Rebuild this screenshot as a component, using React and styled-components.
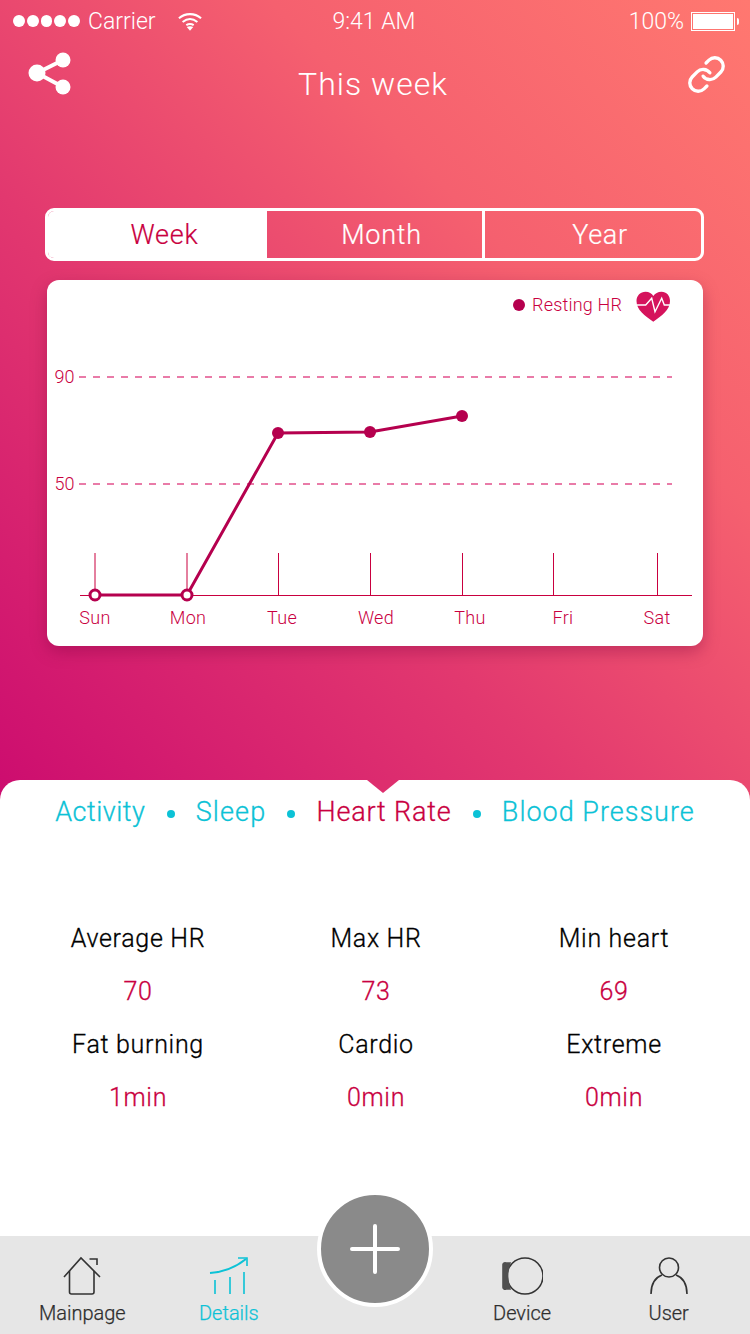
import React from "react";
import styled, { createGlobalStyle } from "styled-components";

const RED = "#c9003f";
const CYAN = "#0cc2d6";

const GlobalStyle = createGlobalStyle`
  html, body {
    margin: 0;
    padding: 0;
    background: #fff;
    font-family: "Roboto", "Liberation Sans", sans-serif;
  }
`;

const Page = styled.div`
  width: 750px;
  height: 1334px;
  display: flex;
  flex-direction: column;
  overflow: hidden;
  background: linear-gradient(to top right, #cc0c6f 0%, #e2386f 38%, #f5606f 68%, #ff7870 100%) 0 0 / 750px 800px no-repeat;
`;

const Hero = styled.div`
  height: 780px;
  flex: none;
  display: flex;
  flex-direction: column;
`;

const StatusBar = styled.div`
  height: 42px;
  display: grid;
  grid-template-columns: 1fr auto 1fr;
  align-items: center;
  padding: 0 15px 0 13px;
  color: #fff;
  font-size: 23px;
  font-weight: 300;
`;

const StatusLeft = styled.div`
  display: flex;
  align-items: center;
`;

const StatusRight = styled.div`
  display: flex;
  align-items: center;
  justify-content: flex-end;
  gap: 7px;
`;

const Dots = styled.div`
  display: flex;
  gap: 2px;
  margin-right: 8px;
`;

const SignalDot = styled.span`
  width: 11.8px;
  height: 11.8px;
  border-radius: 50%;
  background: #fff;
`;

const WifiIcon = styled.svg`
  margin-left: 22px;
`;

const Battery = styled.div`
  width: 40px;
  height: 15px;
  border: 1px solid #fff;
  padding: 1px;
  box-sizing: content-box;
  position: relative;
  &::before {
    content: "";
    display: block;
    height: 100%;
    background: #fff;
  }
  &::after {
    content: "";
    position: absolute;
    right: -5px;
    top: 5px;
    width: 2px;
    height: 7px;
    background: #fff;
    border-radius: 0 2px 2px 0;
  }
`;

const Header = styled.div`
  height: 87px;
  box-sizing: border-box;
  display: grid;
  grid-template-columns: 1fr auto 1fr;
  align-items: start;
  padding: 9px 25px 0 28px;
`;

const LinkIcon = styled.svg`
  justify-self: end;
  margin-top: 5px;
`;

const Title = styled.div`
  color: #fff;
  font-size: 32px;
  font-weight: 300;
  letter-spacing: 1px;
  line-height: 38px;
  margin: 14px 7px 0 0;
`;

const Tabs = styled.div`
  margin: 79px 46px 0 45px;
  height: 53px;
  box-sizing: border-box;
  display: grid;
  grid-template-columns: 219px 218px 1fr;
  border: 3px solid #fff;
  border-radius: 9px;
  overflow: hidden;
`;

const Tab = styled.div`
  display: flex;
  align-items: center;
  justify-content: center;
  padding-left: 14px;
  font-size: 27px;
  font-weight: 300;
  letter-spacing: 0.7px;
  -webkit-text-stroke: 0.2px currentColor;
  color: ${(p) => (p.$active ? RED : "#fff")};
  background: ${(p) => (p.$active ? "#fff" : "transparent")};
  border-right: ${(p) => (p.$last || p.$active ? "none" : "3px solid #fff")};
`;

const Card = styled.div`
  margin: 19px 47px 0;
  height: 366px;
  background: #fff;
  border-radius: 12px;
  box-shadow: 0 6px 16px rgba(120, 0, 60, 0.35);
`;

const ChartSvg = styled.svg`
  display: block;
  width: 656px;
  height: 366px;
  font-family: "Roboto", "Liberation Sans", sans-serif;
  font-weight: 300;
  text {
    -webkit-text-stroke: 0.25px currentColor;
    color: ${RED};
  }
`;

const Sheet = styled.div`
  position: relative;
  height: 456px;
  flex: none;
  box-sizing: border-box;
  padding-top: 14px;
  background: #fff;
  border-radius: 20px 20px 0 0;
  &::before {
    content: "";
    position: absolute;
    left: 367px;
    top: 0;
    border-left: 16px solid transparent;
    border-right: 16px solid transparent;
    border-top: 13px solid #de2f6e;
  }
`;

const Categories = styled.div`
  display: flex;
  justify-content: center;
  align-items: center;
  height: 36px;
`;

const Category = styled.span`
  font-size: 27px;
  font-weight: 300;
  letter-spacing: ${(p) => p.$spacing}px;
  -webkit-text-stroke: 0.3px currentColor;
  color: ${(p) => (p.$active ? RED : CYAN)};
`;

const Bullet = styled.span`
  width: 8px;
  height: 8px;
  border-radius: 50%;
  background: ${CYAN};
  margin: 4px 21.2px 0;
`;

const Stats = styled.div`
  margin: 82px 17px 0 19px;
  display: grid;
  grid-template-columns: repeat(3, 238px);
  grid-auto-rows: 53px;
  text-align: center;
  line-height: 53px;
`;

const StatLabel = styled.div`
  font-size: 25px;
  font-weight: 300;
  letter-spacing: 0.7px;
  -webkit-text-stroke: 0.3px currentColor;
  color: #000;
`;

const StatValue = styled.div`
  font-size: 25px;
  font-weight: 300;
  letter-spacing: 0.7px;
  -webkit-text-stroke: 0.3px currentColor;
  color: ${RED};
`;

const Nav = styled.div`
  position: relative;
  height: 98px;
  flex: none;
  box-sizing: border-box;
  background: #e6e6e6;
  display: grid;
  grid-template-columns: repeat(5, 146.6px);
  padding-left: 9px;
`;

const NavItem = styled.div`
  display: flex;
  flex-direction: column;
  align-items: center;
  color: ${(p) => (p.$active ? CYAN : "#2e2e2e")};
  font-size: 20px;
  font-weight: 300;
  -webkit-text-stroke: 0.25px currentColor;
  padding-top: 20px;
  grid-column: ${(p) => p.$col};
  svg {
    display: block;
    height: 40px;
  }
  span {
    line-height: 26px;
    margin-top: 4px;
  }
`;

const Fab = styled.div`
  position: absolute;
  left: 317px;
  top: -45px;
  width: 108px;
  height: 108px;
  border-radius: 50%;
  background: #8a8a8a;
  border: 4px solid #fff;
  display: flex;
  align-items: center;
  justify-content: center;
`;

const days = [
  { name: "Sun", tick: 48, label: 48 },
  { name: "Mon", tick: 140, label: 141 },
  { name: "Tue", tick: 231.5, label: 235 },
  { name: "Wed", tick: 323.5, label: 329 },
  { name: "Thu", tick: 415.5, label: 423 },
  { name: "Fri", tick: 506.5, label: 516 },
  { name: "Sat", tick: 610.5, label: 610 },
];

const Chart = () => (
  <ChartSvg viewBox="0 0 656 366">
    <circle cx="472" cy="25" r="6" fill="#b5004e" />
    <text x="485" y="30.5" fontSize="18" letterSpacing="0.2" fill={RED}>Resting HR</text>
    <path d="M606.3 41.7C598 36 589.5 30 589.5 21C589.5 15.5 593.5 11.7 598.5 11.7C602 11.7 605 13.5 606.3 16C608 13.5 611 11.7 614.5 11.7C619.5 11.7 623 15.5 623 21C623 30 614.5 36 606.3 41.7Z" fill="#d5135c" />
    <path d="M589.7 25h9l6-6.7 3.3 13.4 6.7-13.4 2.6 6.7h5.7" fill="none" stroke="#fff" strokeWidth="1.4" />
    {[{ v: 90, y: 97 }, { v: 50, y: 204 }].map((g) => (
      <g key={g.v}>
        <text x="7.5" y={g.y + 6} fontSize="18" fill={RED}>{g.v}</text>
        <line x1="32" x2="625" y1={g.y} y2={g.y} stroke="#e2508c" strokeWidth="1.5" strokeDasharray="7 7" />
      </g>
    ))}
    <line x1="33" x2="645" y1="315.5" y2="315.5" stroke={RED} strokeWidth="1" />
    {days.map((d) => (
      <g key={d.name}>
        <line x1={d.tick} x2={d.tick} y1="273" y2="315" stroke={RED} strokeWidth="1" />
        <text x={d.label} y="344" fontSize="18" letterSpacing="0.3" textAnchor="middle" fill={RED}>{d.name}</text>
      </g>
    ))}
    <polyline points="48,315 140,315 231,153 323,152 415,136" fill="none" stroke="#b5004e" strokeWidth="3" />
    <circle cx="48" cy="315" r="5" fill="#fff" stroke="#b5004e" strokeWidth="3" />
    <circle cx="140" cy="315" r="5" fill="#fff" stroke="#b5004e" strokeWidth="3" />
    <circle cx="231" cy="153" r="6" fill="#b5004e" />
    <circle cx="323" cy="152" r="6" fill="#b5004e" />
    <circle cx="415" cy="136" r="6" fill="#b5004e" />
  </ChartSvg>
);

const stats = [
  ["Average HR", "70"],
  ["Max HR", "73"],
  ["Min heart", "69"],
  ["Fat burning", "1min"],
  ["Cardio", "0min"],
  ["Extreme", "0min"],
];

export default function App() {
  const firstRow = stats.slice(0, 3);
  const secondRow = stats.slice(3);
  return (
    <Page>
      <GlobalStyle />
      <Hero>
        <StatusBar>
          <StatusLeft>
            <Dots>
              {[0, 1, 2, 3, 4].map((i) => <SignalDot key={i} />)}
            </Dots>
            Carrier
            <WifiIcon width="24" height="19" viewBox="0 0 26 20">
              <path d="M1 6.5c7-6 17-6 24 0M5 10.5c5-4 11-4 16 0M9 14c3-2 5-2 8 0" fill="none" stroke="#fff" strokeWidth="2.2" />
              <path d="M13 20l-3.5-4c2-1.2 5-1.2 7 0z" fill="#fff" />
            </WifiIcon>
          </StatusLeft>
          <div>9:41 AM</div>
          <StatusRight>
            100%
            <Battery />
          </StatusRight>
        </StatusBar>
        <Header>
          <svg width="44" height="44" viewBox="0 0 44 44">
            <path d="M9 22L35 9M9 22l26 14" stroke="#fff" strokeWidth="4" />
            <circle cx="9" cy="22" r="8.5" fill="#fff" />
            <circle cx="35" cy="9" r="7.5" fill="#fff" />
            <circle cx="35" cy="36" r="7.5" fill="#fff" />
          </svg>
          <Title>This week</Title>
          <LinkIcon width="37" height="37" viewBox="1 1 22 22" fill="none" stroke="#fff" strokeWidth="2" strokeLinecap="round" strokeLinejoin="round">
            <path d="M10 13a5 5 0 0 0 7.54.54l3-3a5 5 0 0 0-7.07-7.07l-1.72 1.71" />
            <path d="M14 11a5 5 0 0 0-7.54-.54l-3 3a5 5 0 0 0 7.07 7.07l1.71-1.71" />
          </LinkIcon>
        </Header>
        <Tabs>
          <Tab $active>Week</Tab>
          <Tab>Month</Tab>
          <Tab $last>Year</Tab>
        </Tabs>
        <Card>
          <Chart />
        </Card>
      </Hero>
      <Sheet>
        <Categories>
          <Category $spacing={0.5}>Activity</Category>
          <Bullet />
          <Category $spacing={1.1}>Sleep</Category>
          <Bullet />
          <Category $active $spacing={0.8}>Heart Rate</Category>
          <Bullet />
          <Category $spacing={1}>Blood Pressure</Category>
        </Categories>
        <Stats>
          {firstRow.map(([label]) => <StatLabel key={label}>{label}</StatLabel>)}
          {firstRow.map(([label, value]) => <StatValue key={label}>{value}</StatValue>)}
          {secondRow.map(([label]) => <StatLabel key={label}>{label}</StatLabel>)}
          {secondRow.map(([label, value]) => <StatValue key={label}>{value}</StatValue>)}
        </Stats>
      </Sheet>
      <Nav>
        <NavItem $col="1">
          <svg width="40" height="38" viewBox="0 0 40 38" fill="none" stroke="#333" strokeWidth="1.6">
            <path d="M2 20L19 1l19 19" />
            <path d="M7.5 14v21a2 2 0 0 0 2 2h20.500a2 2 0 0 0 2-2V14" />
            <path d="M27.500 2H35v6" />
          </svg>
          <span>Mainpage</span>
        </NavItem>
        <NavItem $active $col="2">
          <svg width="40" height="38" viewBox="0 0 40 38" fill="none" stroke={CYAN} strokeWidth="1.6">
            <path d="M1 16c14-1 26-6 36-14" strokeWidth="2" />
            <path d="M29 1h9v8" />
            <path d="M6 37V23M21 37V20M35 37V15" />
          </svg>
          <span>Details</span>
        </NavItem>
        <NavItem $col="4">
          <svg width="42" height="38" viewBox="0 0 42 38" fill="none" stroke="#333" strokeWidth="1.6">
            <circle cx="24" cy="19" r="18" />
            <path d="M9 6H5a2 2 0 0 0-3 2v22a2 2 0 0 0 3 2h4c-3-8-3-18 0-26z" fill="#505050" stroke="#505050" />
          </svg>
          <span>Device</span>
        </NavItem>
        <NavItem $col="5">
          <svg width="38" height="38" viewBox="0 0 38 38" fill="none" stroke="#333" strokeWidth="1.6">
            <circle cx="19" cy="10.500" r="9.500" />
            <path d="M1 37c0-9 3-16 11-19M37 37c0-9-3-16-11-19" />
          </svg>
          <span>User</span>
        </NavItem>
        <Fab>
          <svg width="50" height="50" viewBox="0 0 50 50" stroke="#fff" strokeWidth="4" strokeLinecap="round">
            <path d="M25 2v46M2 25h46" />
          </svg>
        </Fab>
      </Nav>
    </Page>
  );
}
